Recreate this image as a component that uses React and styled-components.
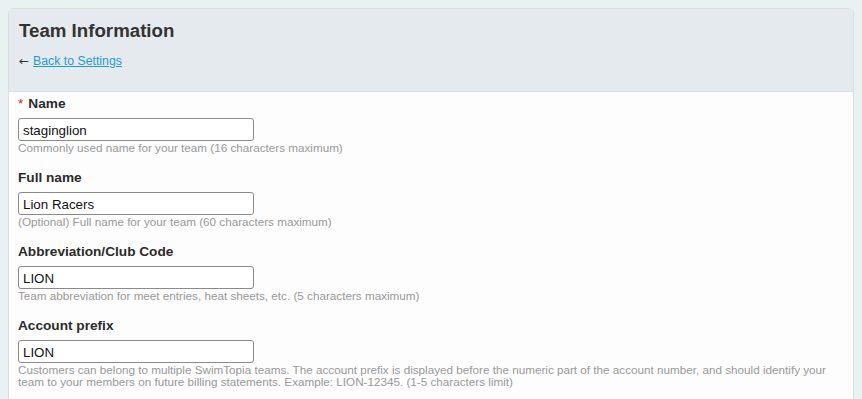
import React from "react";
import styled, { createGlobalStyle } from "styled-components";

const Global = createGlobalStyle`
  html, body { margin: 0; padding: 0; }
  body {
    background: #eaf1f3;
    font-family: "Liberation Sans", Arial, sans-serif;
    color: #333;
    padding: 8px;
  }
`;

const Card = styled.div`
  border: 1px solid #d5dfe2;
  border-radius: 6px;
  background: #fdfdfd;
  min-height: 420px;
  overflow: hidden;
`;

const Header = styled.div`
  background: #e4eaed;
  border-bottom: 1px solid #d5dfe2;
  padding: 9px 10px 0;
  height: 73px;
`;

const Title = styled.h1`
  margin: 0;
  font-size: 18.7px;
  line-height: 26px;
  font-weight: bold;
  color: #333;
`;

const BackRow = styled.div`
  margin-top: 10px;
  font-size: 12.3px;
  line-height: 15px;
  color: #333;
`;

const Arrow = styled.span`
  font-family: "DejaVu Sans", sans-serif;
  font-size: 12px;
  margin-right: 4px;
`;

const Link = styled.a`
  color: #1f9cca;
  text-decoration: underline;
  cursor: pointer;
`;

const Content = styled.div`
  padding: 3px 9px;
`;

const Field = styled.div`
  margin-bottom: 15px;
`;

const Label = styled.label`
  display: block;
  font-size: 13.65px;
  line-height: 17px;
  font-weight: bold;
  color: #2b2b2b;
  margin-bottom: 6px;
`;

const Req = styled.span`
  color: #e0112b;
  font-weight: normal;
  margin-right: 5px;
`;

const Input = styled.input`
  box-sizing: border-box;
  display: block;
  width: 236px;
  height: 23px;
  margin: 0;
  padding: 1px 4px 0;
  border: 1px solid #8a8a8a;
  border-radius: 3px;
  font-family: "Liberation Sans", Arial, sans-serif;
  font-size: 13.33px;
  color: #111;
  background: #fff;
  outline: none;
`;

const Hint = styled.div`
  margin-top: 1px;
  font-size: 11.7px;
  line-height: 12px;
  color: #999;
`;

const fields = [
  {
    label: "Name",
    required: true,
    value: "staginglion",
    hint: "Commonly used name for your team (16 characters maximum)",
  },
  {
    label: "Full name",
    value: "Lion Racers",
    hint: "(Optional) Full name for your team (60 characters maximum)",
  },
  {
    label: "Abbreviation/Club Code",
    value: "LION",
    hint: "Team abbreviation for meet entries, heat sheets, etc. (5 characters maximum)",
  },
  {
    label: "Account prefix",
    value: "LION",
    hint: "Customers can belong to multiple SwimTopia teams. The account prefix is displayed before the numeric part of the account number, and should identify your team to your members on future billing statements. Example: LION-12345. (1-5 characters limit)",
  },
];

export default function App() {
  return (
    <>
      <Global />
      <Card>
        <Header>
          <Title>Team Information</Title>
          <BackRow>
            <Arrow>←</Arrow>
            <Link>Back to Settings</Link>
          </BackRow>
        </Header>
        <Content>
          {fields.map((f) => (
            <Field key={f.label}>
              <Label>
                {f.required && <Req>*</Req>}
                {f.label}
              </Label>
              <Input defaultValue={f.value} />
              <Hint>{f.hint}</Hint>
            </Field>
          ))}
        </Content>
      </Card>
    </>
  );
}
